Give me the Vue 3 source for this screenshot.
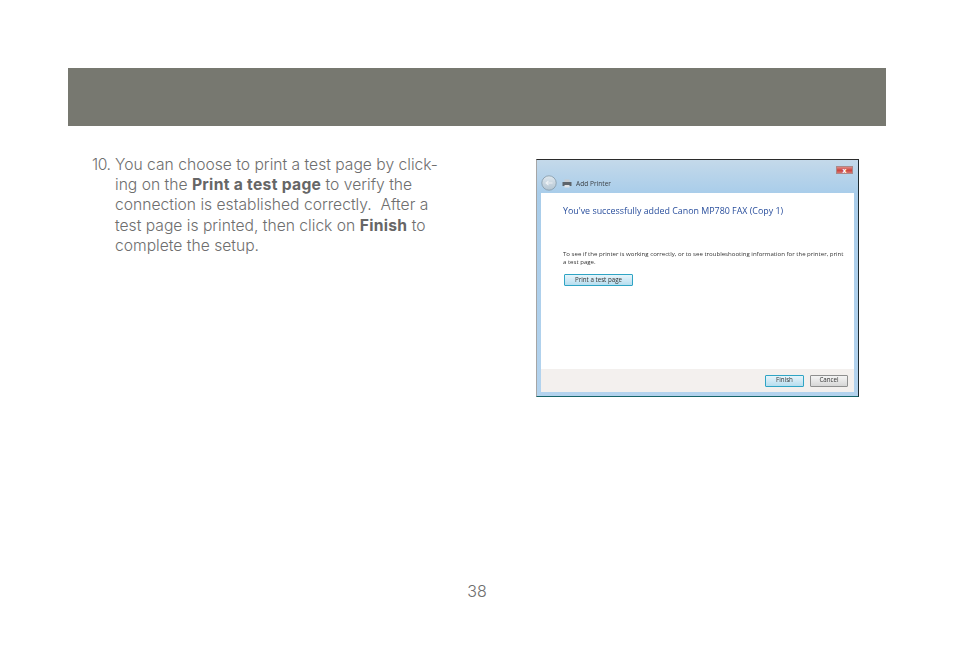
<script setup>
</script>

<template>
  <div class="page">
    <div class="band"></div>
    <div class="content">
      <div class="step">
        <span class="num">10.</span>
        <p class="text">You can choose to print a test page by click-<br>ing on the <b>Print a test page</b> to verify the<br>connection is established correctly.&nbsp; After a<br>test page is printed, then click on <b>Finish</b> to<br>complete the setup.</p>
      </div>
      <div class="window">
        <div class="titlebar">
          <div class="titleleft">
            <svg class="back" width="16" height="16" viewBox="0 0 16 16">
              <defs>
                <linearGradient id="bk" x1="0" y1="0" x2="0" y2="1">
                  <stop offset="0" stop-color="#dfe8ef"/>
                  <stop offset="1" stop-color="#b4c5d2"/>
                </linearGradient>
              </defs>
              <circle cx="8" cy="8" r="7.2" fill="url(#bk)" stroke="#8599a7" stroke-width="0.8"/>
              <path d="M11.5 8H5M7.5 5.8L5 8l2.5 2.2" fill="none" stroke="#eef2f5" stroke-width="1.1"/>
            </svg>
            <svg class="printer" width="10" height="9" viewBox="0 0 10 9">
              <rect x="2.5" y="0.5" width="5" height="3" fill="#c8cbd0"/>
              <rect x="0.5" y="3" width="9" height="4" fill="#5d646b"/>
              <rect x="2.5" y="6" width="5" height="2.5" fill="#dfe2e6"/>
            </svg>
            <span class="wintitle">Add Printer</span>
          </div>
          <div class="close"><span>x</span></div>
        </div>
        <div class="pane">
          <div class="main">
            <div class="heading">You've successfully added Canon MP780 FAX (Copy 1)</div>
            <div class="info">To see if the printer is working correctly, or to see troubleshooting information for the printer, print<br>a test page.</div>
            <button class="btn primary test">Print a test page</button>
          </div>
          <div class="actions">
            <button class="btn primary finish">Finish</button>
            <button class="btn cancel">Cancel</button>
          </div>
        </div>
      </div>
    </div>
    <div class="pagenum">38</div>
  </div>
</template>

<style>
html, body { margin: 0; background: #fff; }
</style>

<style scoped>
.page {
  width: 954px;
  height: 665px;
  box-sizing: border-box;
  padding-top: 68px;
  display: flex;
  flex-direction: column;
  font-family: Inter, "Liberation Sans", Arial, sans-serif;
  background: #fff;
  overflow: hidden;
}
.band {
  width: 818px;
  height: 58px;
  margin-left: 68px;
  background: #777870;
  flex: none;
}
.content {
  display: flex;
  align-items: flex-start;
  padding: 33px 0 0 92px;
  height: 438px;
  box-sizing: border-box;
  flex: none;
}
.step {
  width: 444px;
  display: flex;
  color: #6e6e6e;
  font-size: 15.65px;
  font-weight: 300;
  line-height: 20.2px;
  margin-top: -4px;
  flex: none;
}
.num { width: 23px; flex: none; letter-spacing: -0.4px; }
.text { margin: 0; white-space: nowrap; }
.text b { color: #666; font-weight: 700; letter-spacing: 0.3px; }
.window {
  width: 323px;
  height: 238px;
  box-sizing: border-box;
  flex: none;
  display: flex;
  flex-direction: column;
  border-style: solid;
  border-width: 1px;
  border-color: #2b2b2b #1d2a30 #17656a #a6a6a6;
  background: linear-gradient(180deg, #c4d9ea 0%, #a9cdea 14%, #b3d3ee 100%);
  padding: 0 4px 4px;
  font-family: "Open Sans", "DejaVu Sans", sans-serif;
}
.titlebar {
  height: 33px;
  flex: none;
  display: flex;
  justify-content: space-between;
  align-items: flex-start;
}
.titleleft {
  display: flex;
  align-items: center;
  margin-top: 15px;
  color: #3a3f44;
  font-size: 6.6px;
  filter: blur(0.25px);
}
.back { margin-right: 5px; }
.printer { margin-right: 4px; }
.close {
  width: 17px;
  height: 8px;
  margin: 6px 1px 0 0;
  background: linear-gradient(180deg, #e08a86 0%, #c9453f 55%, #d9746e 100%);
  border: 0.5px solid #a88;
  display: flex;
  align-items: center;
  justify-content: center;
  color: #fff;
  font-size: 7px;
  line-height: 1;
  font-weight: 700;
  box-sizing: border-box;
}
.pane {
  flex: 1;
  display: flex;
  flex-direction: column;
  background: #fff;
}
.main {
  flex: 1;
  padding: 12px 0 0 22px;
  display: flex;
  flex-direction: column;
  align-items: flex-start;
  filter: blur(0.25px);
}
.heading {
  font-size: 8.9px;
  line-height: 12px;
  color: #2a4f9d;
  white-space: nowrap;
}
.info {
  margin-top: 33px;
  font-size: 6.08px;
  line-height: 8px;
  color: #333;
  white-space: nowrap;
}
.btn {
  font-family: inherit;
  font-size: 6.2px;
  line-height: 1;
  color: #333;
  padding: 0;
  box-sizing: border-box;
  border-radius: 1px;
}
.primary {
  border: 1px solid #2fa4c4;
  background: linear-gradient(180deg, #e6f5fb 0%, #cfe9f5 50%, #b6deef 100%);
}
.test {
  margin: 8px 0 0 1px;
  width: 69px;
  height: 12px;
}
.actions {
  height: 23px;
  flex: none;
  background: #f3f0ee;
  display: flex;
  justify-content: flex-end;
  align-items: center;
  gap: 6px;
  padding: 0 6px 0 0;
  filter: blur(0.2px);
}
.finish { width: 39px; height: 12px; }
.cancel {
  width: 38px;
  height: 12px;
  border: 1px solid #8e8f8f;
  background: linear-gradient(180deg, #f4f4f4 0%, #e6e6e6 50%, #d6d6d6 100%);
}
.pagenum {
  margin-top: 18px;
  width: 954px;
  text-align: center;
  font-size: 16px;
  font-weight: 300;
  line-height: 18px;
  color: #6e6e6e;
}
</style>
